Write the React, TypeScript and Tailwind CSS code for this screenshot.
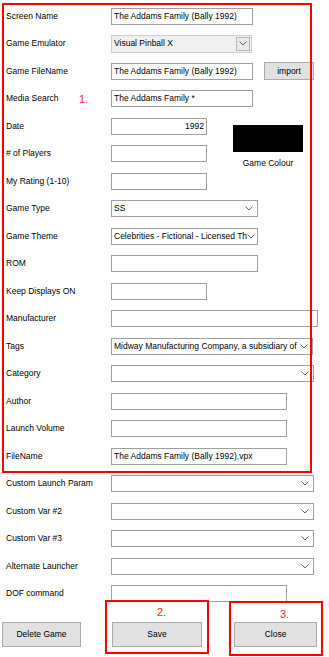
import React from "react";

const font = "font-['Liberation_Sans',Arial,sans-serif]";

function Chevron() {
  return (
    <svg width="8" height="5" viewBox="0 0 8 5" className="shrink-0">
      <path d="M0.5 0.5 L4 4 L7.5 0.5" fill="none" stroke="#555" strokeWidth="0.9" />
    </svg>
  );
}

function TextBox({ w, value = "", right = false }: { w: number; value?: string; right?: boolean }) {
  return (
    <div
      className={`flex h-[17px] items-center overflow-hidden whitespace-nowrap border border-[#a0a0a0] bg-white px-[2px] text-[8.5px] text-black ${right ? "justify-end" : ""}`}
      style={{ width: w }}
    >
      {value}
    </div>
  );
}

function Select({ w, value = "" }: { w: number; value?: string }) {
  return (
    <div
      className="flex h-[17px] items-center justify-between whitespace-nowrap border border-[#a0a0a0] bg-white pl-[2px] pr-[4px] text-[8.5px] text-black"
      style={{ width: w }}
    >
      <span>{value}</span>
      <Chevron />
    </div>
  );
}

function Row({ label, children }: { label: string; children?: React.ReactNode }) {
  return (
    <div className="flex h-[27.5px] items-center">
      <div className="w-[111px] shrink-0 pl-[6px] text-[8.5px] text-black">{label}</div>
      {children}
    </div>
  );
}

export default function App() {
  return (
    <div className={`relative h-[657px] w-[329px] overflow-hidden bg-white ${font}`}>
      <div className="flex flex-col pt-[2.5px]">
        <Row label="Screen Name">
          <TextBox w={142} value="The Addams Family (Bally 1992)" />
        </Row>
        <Row label="Game Emulator">
          <div className="flex h-[18px] w-[141px] items-center justify-between border border-[#cfcfcf] bg-[#f0f0f0] pl-[2px] pr-[1px] text-[8.5px] text-black">
            <span>Visual Pinball X</span>
            <div className="flex h-[14px] w-[14px] items-center justify-center border border-[#b8b8b8] bg-[#e8e8e8]">
              <Chevron />
            </div>
          </div>
        </Row>
        <Row label="Game FileName">
          <TextBox w={142} value="The Addams Family (Bally 1992)" />
          <div className="ml-[11px] flex h-[18px] w-[50px] items-center justify-center border border-[#adadad] bg-[#e1e1e1] text-[8.5px] text-black">
            import
          </div>
        </Row>
        <Row label="Media Search">
          <TextBox w={142} value="The Addams Family *" />
        </Row>
        <div className="flex">
          <div className="flex flex-col">
            <Row label="Date">
              <TextBox w={96} value="1992" right />
            </Row>
            <Row label="# of Players">
              <TextBox w={96} />
            </Row>
            <Row label="My Rating (1-10)">
              <TextBox w={96} />
            </Row>
          </div>
          <div className="ml-[26px] flex flex-col items-center pt-[12.5px]">
            <div className="h-[27px] w-[70px] bg-black" />
            <div className="mt-[5px] text-[8.5px] text-black">Game Colour</div>
          </div>
        </div>
        <Row label="Game Type">
          <Select w={147} value="SS" />
        </Row>
        <Row label="Game Theme">
          <Select w={147} value="Celebrities - Fictional - Licensed Th" />
        </Row>
        <Row label="ROM">
          <TextBox w={147} />
        </Row>
        <Row label="Keep Displays ON">
          <TextBox w={96} />
        </Row>
        <Row label="Manufacturer">
          <TextBox w={207} />
        </Row>
        <Row label="Tags">
          <Select w={202} value="Midway Manufacturing Company, a subsidiary of" />
        </Row>
        <Row label="Category">
          <Select w={203} />
        </Row>
        <Row label="Author">
          <TextBox w={176} />
        </Row>
        <Row label="Launch Volume">
          <TextBox w={176} />
        </Row>
        <Row label="FileName">
          <TextBox w={176} value="The Addams Family (Bally 1992).vpx" />
        </Row>
        <Row label="Custom Launch Param">
          <Select w={203} />
        </Row>
        <Row label="Custom Var #2">
          <Select w={203} />
        </Row>
        <Row label="Custom Var #3">
          <Select w={203} />
        </Row>
        <Row label="Alternate Launcher">
          <Select w={203} />
        </Row>
        <Row label="DOF command">
          <TextBox w={176} />
        </Row>
        <div className="mt-[14px] flex items-center text-[8.5px] text-black">
          <div className="ml-[2px] flex h-[25px] w-[79px] items-center justify-center border border-[#adadad] bg-[#e1e1e1]">
            Delete Game
          </div>
          <div className="ml-[31px] flex h-[25px] w-[90px] items-center justify-center border border-[#adadad] bg-[#e1e1e1]">
            Save
          </div>
          <div className="ml-[32px] flex h-[25px] w-[83px] items-center justify-center border border-[#adadad] bg-[#e1e1e1]">
            Close
          </div>
        </div>
      </div>

      {/* annotation overlays */}
      <div className="pointer-events-none absolute left-[2px] top-[3px] h-[470px] w-[310px] border-2 border-[#ff0000]" />
      <div className="absolute left-[79px] top-[91px] text-[11px] text-[#ff2020]">1.</div>
      <div className="pointer-events-none absolute left-[105px] top-[600px] h-[54px] w-[104px] border-2 border-[#ff0000]" />
      <div className="absolute left-[157px] top-[604px] text-[11px] text-[#ff2020]">2.</div>
      <div className="pointer-events-none absolute left-[229px] top-[601px] h-[55px] w-[94px] border-2 border-[#ff0000]" />
      <div className="absolute left-[280px] top-[606px] text-[11px] text-[#ff2020]">3.</div>
    </div>
  );
}
